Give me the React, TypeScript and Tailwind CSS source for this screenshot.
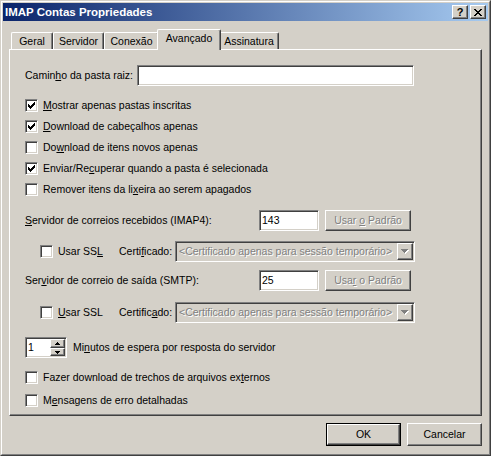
import React from 'react'

const raised =
  'border border-t-white border-l-white border-r-[#404040] border-b-[#404040] shadow-[inset_-1px_-1px_#808080]'
const sunken =
  'border border-t-[#808080] border-l-[#808080] border-r-white border-b-white shadow-[inset_1px_1px_#404040,inset_-1px_-1px_#D4D0C8]'
const disabledText = 'text-[#808080] [text-shadow:1px_1px_0_#ffffff]'

const U = ({ children }: { children: React.ReactNode }) => (
  <span className="underline underline-offset-[1px]">{children}</span>
)

function Check({ checked }: { checked?: boolean }) {
  return (
    <span className={`flex h-[13px] w-[13px] shrink-0 items-center justify-center bg-white ${sunken}`}>
      {checked && (
        <svg width="7" height="7" viewBox="0 0 7 7" shapeRendering="crispEdges">
          <path
            d="M6 0h1v1h-1z M5 1h2v1h-2z M0 2h1v1h-1z M4 2h3v1h-3z M0 3h2v1h-2z M3 3h3v1h-3z M0 4h5v1h-5z M1 5h3v1h-3z M2 6h1v1h-1z"
            fill="#000"
          />
        </svg>
      )}
    </span>
  )
}

function CheckRow({ checked, children }: { checked?: boolean; children: React.ReactNode }) {
  return (
    <div className="flex h-[21px] items-center gap-[5px] pl-[15px]">
      <Check checked={checked} />
      <span className="whitespace-nowrap">{children}</span>
    </div>
  )
}

function Arrow({ up, disabled }: { up?: boolean; disabled?: boolean }) {
  const d = up ? 'M2 0h1v1h-1z M1 1h3v1h-3z M0 2h5v1h-5z' : 'M0 0h5v1h-5z M1 1h3v1h-3z M2 2h1v1h-1z'
  const d7 = 'M0 0h7v1h-7z M1 1h5v1h-5z M2 2h3v1h-3z M3 3h1v1h-1z'
  if (disabled) {
    return (
      <svg width="8" height="5" viewBox="0 0 8 5" shapeRendering="crispEdges">
        <path d={d7} fill="#fff" transform="translate(1 1)" />
        <path d={d7} fill="#808080" />
      </svg>
    )
  }
  return (
    <svg width="5" height="3" viewBox="0 0 5 3" shapeRendering="crispEdges">
      <path d={d} fill="#000" />
    </svg>
  )
}

function Combo() {
  return (
    <div className={`flex h-[21px] w-[240px] items-center bg-[#D4D0C8] pl-[3px] ${sunken}`}>
      <span className={`flex-1 whitespace-nowrap ${disabledText}`}>
        &lt;Certificado apenas para sessão temporário&gt;
      </span>
      <span className={`mr-[1px] flex h-[17px] w-[16px] items-center justify-center bg-[#D4D0C8] ${raised}`}>
        <Arrow disabled />
      </span>
    </div>
  )
}

function ServerRow({ label, port, button }: { label: React.ReactNode; port: string; button: React.ReactNode }) {
  return (
    <div className="flex h-[21px] items-center pl-[15px]">
      <span className="w-[234px] whitespace-nowrap">{label}</span>
      <div className={`flex h-[21px] w-[60px] items-start bg-white px-[2px] pt-[3px] leading-[13px] ${sunken}`}>{port}</div>
      <div className={`ml-[6px] flex h-[21px] w-[86px] items-center justify-center bg-[#D4D0C8] ${raised} ${disabledText}`}>
        {button}
      </div>
    </div>
  )
}

function SslRow({ ssl, cert }: { ssl: React.ReactNode; cert: React.ReactNode }) {
  return (
    <div className="flex h-[21px] items-center pl-[30px]">
      <div className="flex w-[79px] items-center gap-[5px]">
        <Check />
        <span className="whitespace-nowrap">{ssl}</span>
      </div>
      <span className="w-[56px] whitespace-nowrap">{cert}</span>
      <Combo />
    </div>
  )
}

const tabs = [
  { label: 'Geral', cls: 'w-[42px]' },
  { label: 'Servidor', cls: 'w-[51px]' },
  { label: 'Conexão', cls: 'w-[55px]' },
  { label: 'Avançado', cls: 'w-[64px]', active: true },
  { label: 'Assinatura', cls: 'w-[60px]' },
]

export default function App() {
  return (
    <div className="h-[456px] w-[491px] border border-t-[#D4D0C8] border-l-[#D4D0C8] border-r-[#404040] border-b-[#404040] bg-[#D4D0C8] font-['Liberation_Sans',Arial,sans-serif] text-[10.5px] leading-[13px] text-black select-none">
      <div className="h-full w-full border border-t-white border-l-white border-r-[#808080] border-b-[#808080] p-[1px]">
        {/* title bar */}
        <div className="flex h-[18px] items-center bg-[linear-gradient(to_right,#0A246A,#A6CAF0)] pl-[2px] pr-[2px]">
          <span className="flex-1 text-[11.5px] font-bold text-white">IMAP Contas Propriedades</span>
          <span className={`flex h-[14px] w-[16px] items-center justify-center bg-[#D4D0C8] text-[11px] font-bold leading-none ${raised}`}>
            ?
          </span>
          <span className={`ml-[2px] flex h-[14px] w-[16px] items-center justify-center bg-[#D4D0C8] ${raised}`}>
            <svg width="8" height="7" viewBox="0 0 8 7" shapeRendering="crispEdges">
              <path
                d="M0 0h2v1h-2z M6 0h2v1h-2z M1 1h2v1h-2z M5 1h2v1h-2z M2 2h4v1h-4z M3 3h2v1h-2z M2 4h4v1h-4z M1 5h2v1h-2z M5 5h2v1h-2z M0 6h2v1h-2z M6 6h2v1h-2z"
                fill="#000"
              />
            </svg>
          </span>
        </div>

        {/* tabs */}
        <div className="ml-[8px] mt-[8px] flex h-[20px] items-end">
          {tabs.map((t) =>
            t.active ? (
              <div
                key={t.label}
                className={`relative z-10 -mx-[2px] -mb-[1px] flex h-[21px] justify-center rounded-tl-[2px] rounded-tr-[2px] border-t border-l border-r border-t-white border-l-white border-r-[#404040] bg-[#D4D0C8] pt-[2px] shadow-[inset_-1px_0_#808080] ${t.cls}`}
              >
                {t.label}
              </div>
            ) : (
              <div
                key={t.label}
                className={`flex h-[17px] justify-center rounded-tl-[2px] rounded-tr-[2px] border-t border-l border-r border-t-white border-l-white border-r-[#404040] bg-[#D4D0C8] pt-[2px] shadow-[inset_-1px_0_#808080] ${t.cls}`}
              >
                {t.label}
              </div>
            ),
          )}
        </div>

        {/* panel */}
        <div className="mx-[6px] h-[367px] border border-t-white border-l-white border-r-[#404040] border-b-[#404040] shadow-[inset_-1px_-1px_#808080]">
          <div className="mt-[15px] flex h-[21px] items-center pl-[15px]">
            <span className="w-[112px] whitespace-nowrap">
              Camin<U>h</U>o da pasta raiz:
            </span>
            <div className={`h-[21px] w-[277px] bg-white ${sunken}`} />
          </div>

          <div className="mt-[9px]">
            <CheckRow checked>
              <U>M</U>ostrar apenas pastas inscritas
            </CheckRow>
            <CheckRow checked>
              <U>D</U>ownload de cabeçalhos apenas
            </CheckRow>
            <CheckRow>
              Do<U>w</U>nload de itens novos apenas
            </CheckRow>
            <CheckRow checked>
              Enviar/Re<U>c</U>uperar quando a pasta é selecionada
            </CheckRow>
            <CheckRow>
              Remover itens da li<U>x</U>eira ao serem apagados
            </CheckRow>
          </div>

          <div className="mt-[10px]">
            <ServerRow
              label={
                <>
                  <U>S</U>ervidor de correios recebidos (IMAP4):
                </>
              }
              port="143"
              button={
                <>
                  Usar&nbsp;<U>o</U>&nbsp;Padrão
                </>
              }
            />
          </div>
          <div className="mt-[10px]">
            <SslRow
              ssl={
                <>
                  Usar SS<U>L</U>
                </>
              }
              cert={
                <>
                  Certi<U>f</U>icado:
                </>
              }
            />
          </div>
          <div className="mt-[8px]">
            <ServerRow
              label={
                <>
                  Ser<U>v</U>idor de correio de saída (SMTP):
                </>
              }
              port="25"
              button={
                <>
                  Usa<U>r</U>&nbsp;o Padrão
                </>
              }
            />
          </div>
          <div className="mt-[11px]">
            <SslRow
              ssl={
                <>
                  <U>U</U>sar SSL
                </>
              }
              cert={
                <>
                  Certific<U>a</U>do:
                </>
              }
            />
          </div>

          <div className="mt-[14px] flex h-[21px] items-center pl-[15px]">
            <div className={`flex h-[21px] w-[42px] bg-white ${sunken}`}>
              <span className="flex-1 pl-[2px] pt-[3px]">1</span>
              <div className="flex w-[16px] flex-col py-[1px] pr-[1px]">
                <span className={`flex h-[9px] items-center justify-center bg-[#D4D0C8] ${raised}`}>
                  <Arrow up />
                </span>
                <span className={`flex h-[8px] items-center justify-center bg-[#D4D0C8] ${raised}`}>
                  <Arrow />
                </span>
              </div>
            </div>
            <span className="ml-[6px] whitespace-nowrap">
              Mi<U>n</U>utos de espera por resposta do servidor
            </span>
          </div>

          <div className="mt-[9px]">
            <CheckRow>
              Fazer download de trechos de arquivos ex<U>t</U>ernos
            </CheckRow>
          </div>
          <div className="mt-[2px]">
            <CheckRow>
              M<U>e</U>nsagens de erro detalhadas
            </CheckRow>
          </div>
        </div>

        {/* buttons */}
        <div className="mr-[6px] mt-[7px] flex justify-end gap-[6px]">
          <div className="h-[23px] w-[75px] border border-black">
            <div className={`flex h-full w-full items-center justify-center bg-[#D4D0C8] ${raised}`}>OK</div>
          </div>
          <div className={`flex h-[23px] w-[75px] items-center justify-center bg-[#D4D0C8] ${raised}`}>Cancelar</div>
        </div>
      </div>
    </div>
  )
}
